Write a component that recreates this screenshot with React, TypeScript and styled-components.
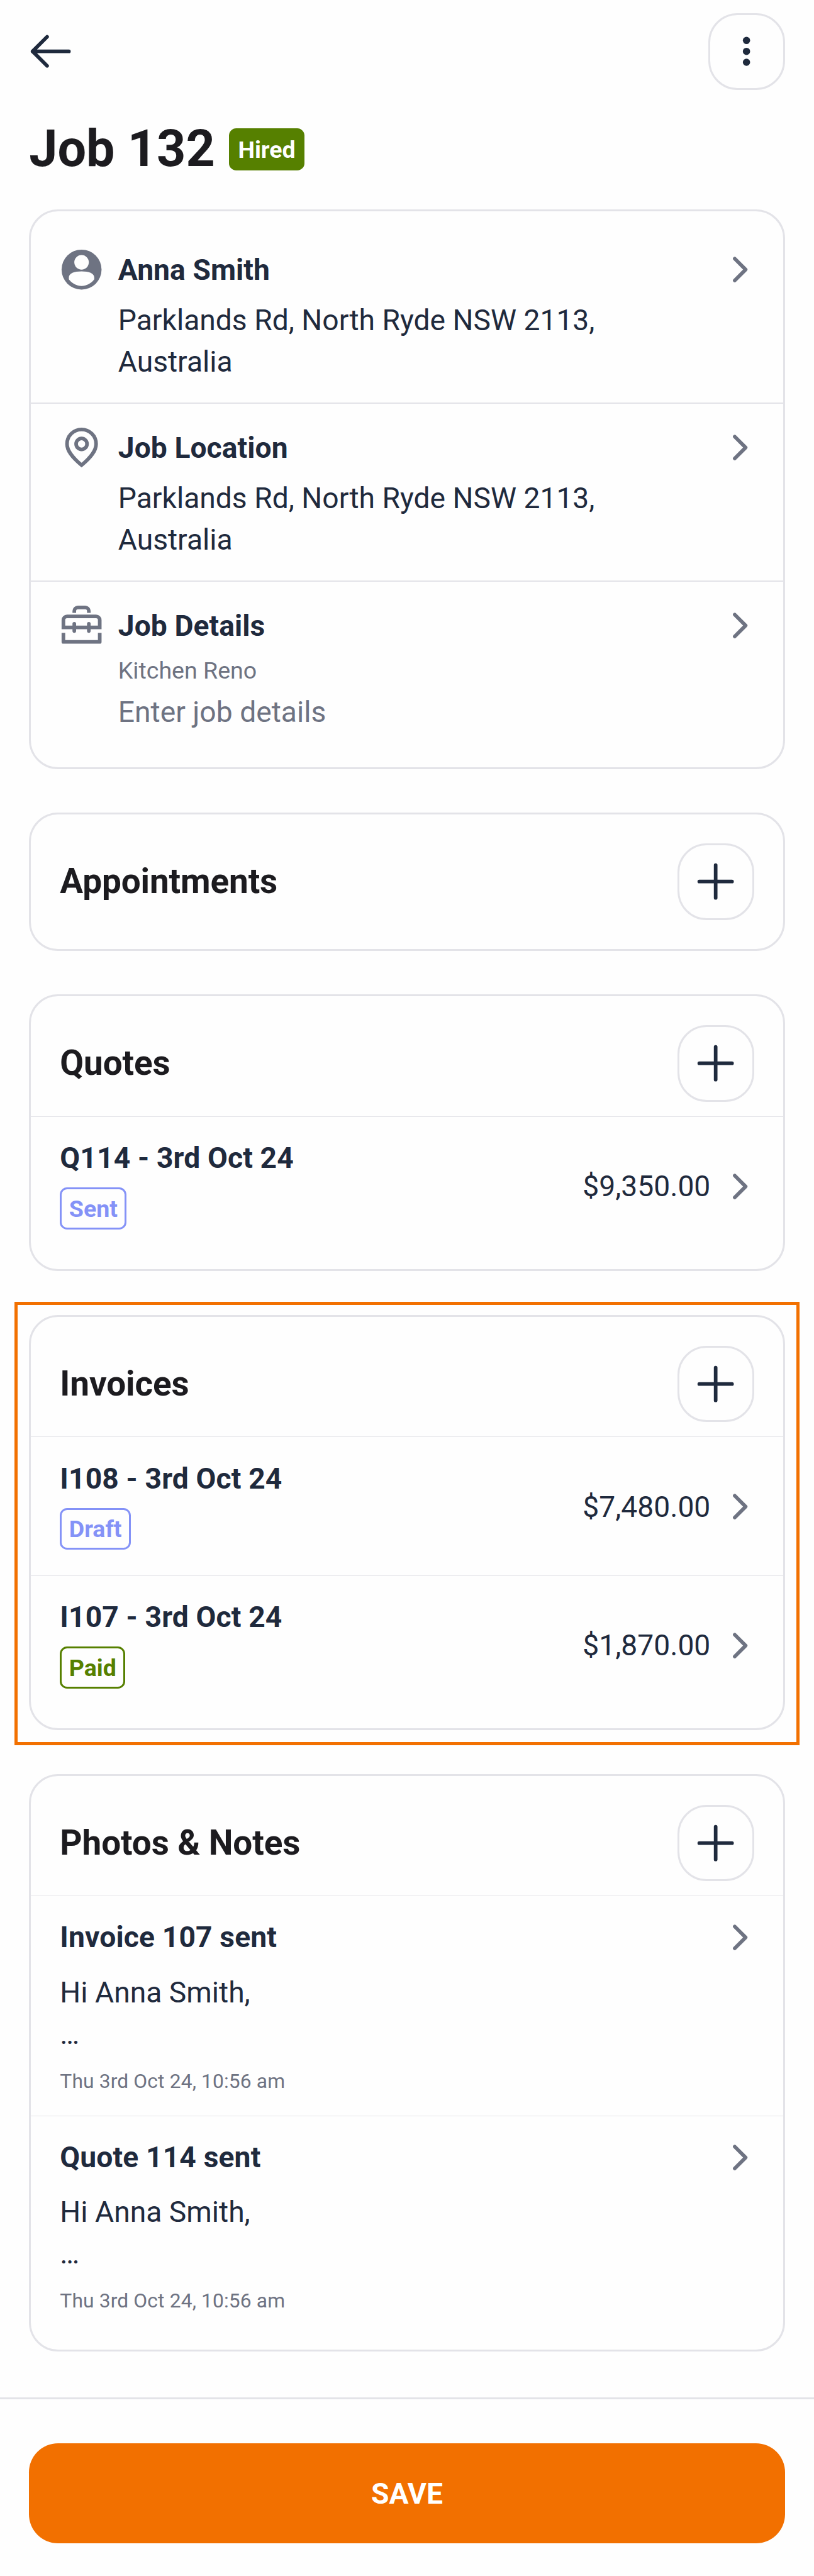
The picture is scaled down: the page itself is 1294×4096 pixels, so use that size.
import React from "react";
import styled, { createGlobalStyle, css } from "styled-components";

const SCALE = 0.963;
const s = (n: number) => `${(n * SCALE).toFixed(3)}px`;
// A scaled length with a whole-pixel border width taken off it.
const less = (n: number, border: number) => `${(n * SCALE - border).toFixed(3)}px`;

const color = {
  heading: "#1c1b1f",
  ink: "#1f2a3d",
  muted: "#6e7382",
  line: "#e3e3e8",
  orange: "#f27000",
  green: "#568000",
  indigo: "#8492f7",
  page: "#fefefe",
};

const GlobalStyle = createGlobalStyle`
  *, *::before, *::after { box-sizing: border-box; }
  body {
    margin: 0;
    background: ${color.page};
    font-family: Roboto, "Liberation Sans", sans-serif;
    color: ${color.ink};
  }
  h1, h2, h3, p { margin: 0; }
  button { font: inherit; color: inherit; cursor: pointer; }
`;

const Page = styled.div`
  display: flex;
  flex-direction: column;
  width: 100%;
  height: ${s(4253)};
  overflow: hidden;
`;

const TopBar = styled.header`
  display: flex;
  justify-content: space-between;
  align-items: center;
  padding: ${s(22)} ${s(48)} 0;
`;

const BackButton = styled.button`
  display: flex;
  padding: 0;
  border: 0;
  background: none;
`;

const SquircleButton = styled.button`
  display: flex;
  align-items: center;
  justify-content: center;
  flex: none;
  width: ${s(126)};
  height: ${s(126)};
  padding: 0;
  border: 3px solid ${color.line};
  border-radius: ${s(48)};
  background: none;
`;

const TitleRow = styled.div`
  display: flex;
  align-items: center;
  height: ${s(100)};
  margin-top: ${s(48)};
  padding: 0 ${s(48)};
`;

const PageTitle = styled.h1`
  font-size: ${s(84)};
  line-height: ${s(100)};
  font-weight: 700;
  color: ${color.heading};
`;

type Tone = "solid" | "indigo" | "green";

const Badge = styled.span<{ $tone: Tone }>`
  display: inline-flex;
  align-items: center;
  height: ${s(69)};
  padding: ${s(2)} ${less(15, 3)} 0;
  border: 3px solid;
  border-radius: ${s(12)};
  font-size: ${s(39)};
  line-height: 1;
  font-weight: 700;
  ${({ $tone }) =>
    $tone === "solid"
      ? css`
          background: ${color.green};
          border-color: ${color.green};
          color: #fff;
          margin-top: ${s(1)};
          margin-left: ${s(23)};
        `
      : css`
          border-color: ${color[$tone]};
          color: ${color[$tone]};
        `}
`;

const Stack = styled.main`
  display: flex;
  flex-direction: column;
  gap: ${s(72)};
  margin-top: ${s(50)};
  padding: 0 ${s(48)};
`;

const Card = styled.section<{ $highlight?: boolean }>`
  position: relative;
  border: 3px solid ${color.line};
  border-radius: ${s(48)};
  padding-bottom: ${less(27, 3)};

  ${({ $highlight }) =>
    $highlight &&
    css`
      &::after {
        content: "";
        position: absolute;
        top: ${less(-22, 3)};
        left: ${less(-24, 3)};
        right: ${less(-24, 3)};
        bottom: ${less(-25, 3)};
        border: 5px solid ${color.orange};
        pointer-events: none;
      }
    `}
`;

const SectionHead = styled.div`
  display: flex;
  align-items: flex-start;
  justify-content: space-between;
  height: ${less(201, 3)};
  padding: ${less(51, 3)} ${less(51, 3)} 0;
`;

const SectionTitle = styled.h2`
  font-size: ${s(57)};
  line-height: ${s(125)};
  font-weight: 700;
  letter-spacing: ${s(-0.12)};
  color: ${color.heading};
`;

const InfoCard = styled(Card)`
  padding: ${less(27, 3)} 0 0;
`;

const InfoRow = styled.div<{ $height: number }>`
  display: flex;
  align-items: flex-start;
  height: ${({ $height }) => s($height)};
  padding: ${s(36)} ${less(37.5, 3)} 0 ${less(51, 3)};

  & + & {
    border-top: 2px solid ${color.line};
    padding-top: ${less(38, 2)};
  }
`;

const InfoText = styled.div`
  width: ${s(930)};
  margin-left: ${s(24)};
  margin-right: auto;
`;

const RowTitle = styled.h3<{ $line: number; $spacing?: number }>`
  font-size: ${s(48)};
  line-height: ${({ $line }) => s($line)};
  font-weight: 700;
  letter-spacing: ${({ $spacing = 0.14 }) => s($spacing)};
`;

const Body = styled.p<{ $top: number; $muted?: boolean }>`
  margin-top: ${({ $top }) => s($top)};
  font-size: ${s(48)};
  line-height: ${s(68.3)};
  color: ${({ $muted }) => ($muted ? color.muted : color.ink)};
  white-space: pre-line;
`;

const Caption = styled.p`
  margin-top: ${s(9)};
  font-size: ${s(39)};
  line-height: ${s(56)};
  color: ${color.muted};
`;

const MoneyRow = styled.div`
  display: flex;
  align-items: center;
  justify-content: space-between;
  height: ${s(229)};
  padding: 0 ${less(37.5, 3)} 0 ${less(51, 3)};
  border-top: 1px solid ${color.line};
`;

const MoneyInfo = styled.div`
  display: flex;
  flex-direction: column;
  align-items: flex-start;
  gap: ${s(15)};
  margin-bottom: ${s(6)};
`;

const MoneySide = styled.div`
  display: flex;
  align-items: center;
  gap: ${s(13.5)};
  margin-top: ${s(2)};
`;

const Price = styled.span`
  font-size: ${s(48)};
  line-height: ${s(73)};
`;

const NoteRow = styled.div`
  display: flex;
  align-items: flex-start;
  justify-content: space-between;
  height: ${s(363)};
  padding: ${less(33.4, 1)} ${less(37.5, 3)} 0 ${less(51, 3)};
  border-top: 1px solid ${color.line};
`;

const Stamp = styled.p`
  margin-top: ${s(20)};
  font-size: ${s(33)};
  line-height: ${s(48)};
  letter-spacing: ${s(0.14)};
  color: ${color.muted};
`;

const Footer = styled.footer`
  margin-top: ${s(75)};
  border-top: 3px solid ${color.line};
  padding: ${less(76, 3)} ${s(48)} 0;
`;

const SaveButton = styled.button`
  display: flex;
  align-items: center;
  justify-content: center;
  width: 100%;
  height: ${s(165)};
  padding: ${s(2)} 0 0;
  border: 0;
  border-radius: ${s(48)};
  background: ${color.orange};
  color: #fff;
  font-size: ${s(48)};
  font-weight: 700;
`;

const Icon = styled.svg.attrs({ viewBox: "0 0 72 72", fill: "none", strokeWidth: 6 })<{ $muted?: boolean }>`
  flex: none;
  width: ${s(72)};
  height: ${s(72)};
  color: ${({ $muted }) => ($muted ? color.muted : color.ink)};
  stroke: currentColor;
`;

const BackIcon = () => (
  <Icon strokeLinecap="round" strokeLinejoin="round">
    <path d="M66 36H6M30 12L6 36L30 60" />
  </Icon>
);

const MoreIcon = () => (
  <Icon>
    <g fill="currentColor" stroke="none">
      <circle cx="36" cy="18" r="6" />
      <circle cx="36" cy="36" r="6" />
      <circle cx="36" cy="54" r="6" />
    </g>
  </Icon>
);

const PlusIcon = () => (
  <Icon strokeLinecap="round">
    <path d="M36 9V63M9 36H63" />
  </Icon>
);

const ChevronIcon = () => (
  <Icon $muted strokeLinecap="round" strokeLinejoin="round">
    <path d="M27 18L45 36L27 54" />
  </Icon>
);

const PersonIcon = () => (
  <Icon $muted>
    <circle cx="36" cy="36" r="33" fill="currentColor" stroke="none" />
    <g fill={color.page} stroke="none">
      <circle cx="36" cy="24" r="12" />
      <path d="M36 39C24 39 15 42 15 49.5C15 52 15 52.3 16 53.3C20.5 59 28 63 36 63C44 63 51.5 59 56 53.3C57 52.3 57 52 57 49.5C57 42 48 39 36 39Z" />
    </g>
  </Icon>
);

const PinIcon = () => (
  <Icon $muted>
    <path d="M36 6A24 24 0 0 1 60 30C60 41 52 51.5 36 65C20 51.5 12 41 12 30A24 24 0 0 1 36 6Z" />
    <circle cx="36" cy="30" r="9" />
  </Icon>
);

const ToolboxIcon = () => (
  <Icon $muted>
    <path d="M24 15V12A6 6 0 0 1 30 6H42A6 6 0 0 1 48 12V15" />
    <path d="M6 39V27A6 6 0 0 1 12 21H60A6 6 0 0 1 66 27V39Z" />
    <path d="M6 48V63H66V48" strokeLinejoin="round" />
    <path d="M24 33V45M48 33V45" strokeLinecap="round" />
  </Icon>
);

const AddButton = ({ label }: { label: string }) => (
  <SquircleButton aria-label={label}>
    <PlusIcon />
  </SquircleButton>
);

const Money = ({ title, status, tone, amount }: { title: string; status: string; tone: Tone; amount: string }) => (
  <MoneyRow>
    <MoneyInfo>
      <RowTitle $line={66}>{title}</RowTitle>
      <Badge $tone={tone}>{status}</Badge>
    </MoneyInfo>
    <MoneySide>
      <Price>{amount}</Price>
      <ChevronIcon />
    </MoneySide>
  </MoneyRow>
);

const Note = ({ title }: { title: string }) => (
  <NoteRow>
    <div>
      <RowTitle $line={72}>{title}</RowTitle>
      <Body $top={21}>{"Hi Anna Smith,\n…"}</Body>
      <Stamp>Thu 3rd Oct 24, 10:56 am</Stamp>
    </div>
    <ChevronIcon />
  </NoteRow>
);

const ADDRESS = "Parklands Rd, North Ryde NSW 2113, Australia";

export default function App() {
  return (
    <Page>
      <GlobalStyle />
      <TopBar>
        <BackButton aria-label="Back">
          <BackIcon />
        </BackButton>
        <SquircleButton aria-label="More options">
          <MoreIcon />
        </SquircleButton>
      </TopBar>
      <TitleRow>
        <PageTitle>Job 132</PageTitle>
        <Badge $tone="solid">Hired</Badge>
      </TitleRow>

      <Stack>
        <InfoCard>
          <InfoRow $height={292}>
            <PersonIcon />
            <InfoText>
              <RowTitle $line={74} $spacing={0.06}>
                Anna Smith
              </RowTitle>
              <Body $top={12.3}>{ADDRESS}</Body>
            </InfoText>
            <ChevronIcon />
          </InfoRow>
          <InfoRow $height={294}>
            <PinIcon />
            <InfoText>
              <RowTitle $line={74} $spacing={0.06}>
                Job Location
              </RowTitle>
              <Body $top={12.3}>{ADDRESS}</Body>
            </InfoText>
            <ChevronIcon />
          </InfoRow>
          <InfoRow $height={308}>
            <ToolboxIcon />
            <InfoText>
              <RowTitle $line={74} $spacing={0.06}>
                Job Details
              </RowTitle>
              <Caption>Kitchen Reno</Caption>
              <Body $top={6} $muted>
                Enter job details
              </Body>
            </InfoText>
            <ChevronIcon />
          </InfoRow>
        </InfoCard>

        <Card>
          <SectionHead>
            <SectionTitle>Appointments</SectionTitle>
            <AddButton label="Add appointment" />
          </SectionHead>
        </Card>

        <Card>
          <SectionHead>
            <SectionTitle>Quotes</SectionTitle>
            <AddButton label="Add quote" />
          </SectionHead>
          <Money title="Q114 - 3rd Oct 24" status="Sent" tone="indigo" amount="$9,350.00" />
        </Card>

        <Card $highlight>
          <SectionHead>
            <SectionTitle>Invoices</SectionTitle>
            <AddButton label="Add invoice" />
          </SectionHead>
          <Money title="I108 - 3rd Oct 24" status="Draft" tone="indigo" amount="$7,480.00" />
          <Money title="I107 - 3rd Oct 24" status="Paid" tone="green" amount="$1,870.00" />
        </Card>

        <Card>
          <SectionHead>
            <SectionTitle>Photos &amp; Notes</SectionTitle>
            <AddButton label="Add photo or note" />
          </SectionHead>
          <Note title="Invoice 107 sent" />
          <Note title="Quote 114 sent" />
        </Card>
      </Stack>

      <Footer>
        <SaveButton>SAVE</SaveButton>
      </Footer>
    </Page>
  );
}
